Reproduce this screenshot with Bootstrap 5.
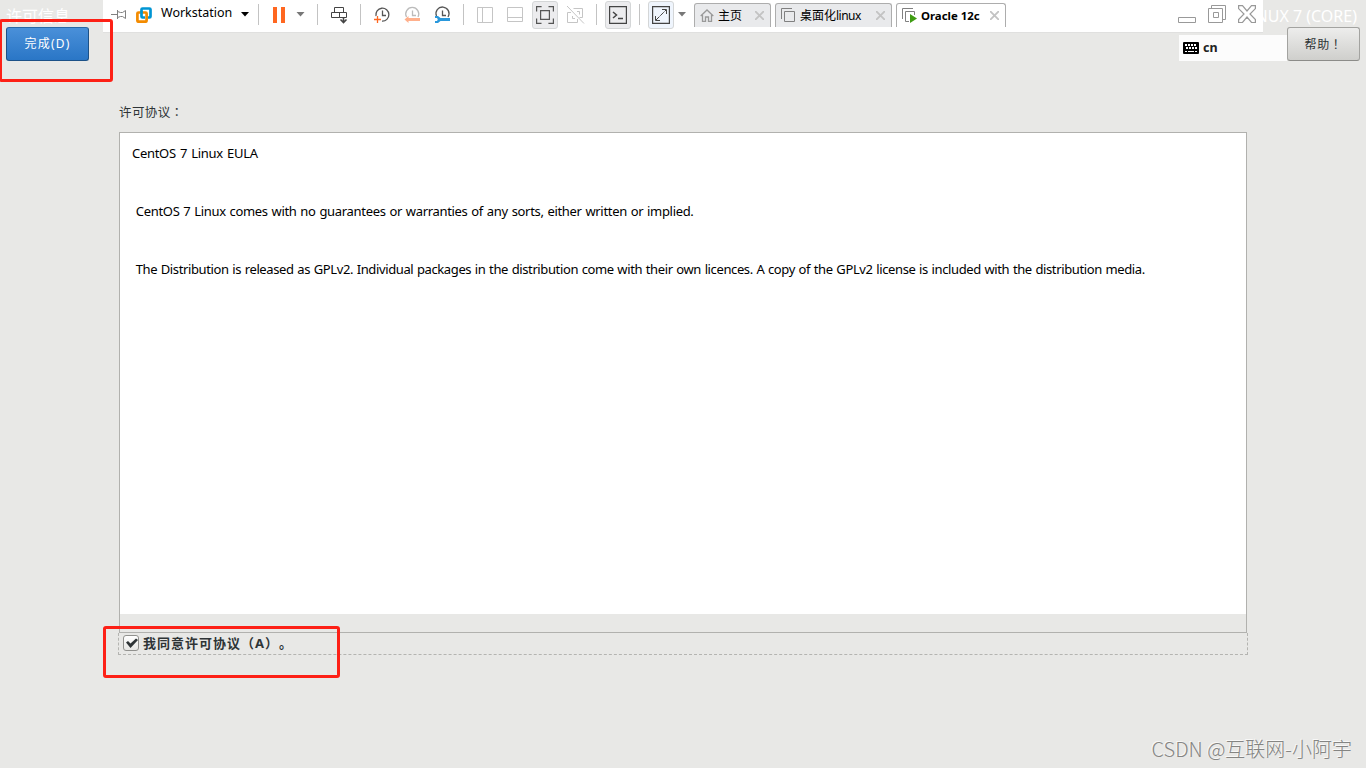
<!DOCTYPE html>
<html lang="zh-CN">
<head>
<meta charset="utf-8">
<meta name="viewport" content="width=device-width, initial-scale=1">
<title>许可信息</title>
<link href="https://cdn.jsdelivr.net/npm/bootstrap@5.3.0/dist/css/bootstrap.min.css" rel="stylesheet">
<style>
body{background:#e8e8e6;font-family:"Noto Sans","Noto Sans CJK SC",sans-serif;font-size:13px;color:#2e3436;height:768px;overflow:hidden}
svg{display:block;flex:none}
.installer{height:768px}
.top-line{height:27px;font-size:16px;line-height:24px;color:#fff;padding:4px 9px 0 6px}
.actions{padding:0 6px;height:34px}
.btn-done,.btn-help{height:34px;font-size:12px;padding:0;border-radius:3px;line-height:30px}
.btn-done{width:83px;color:#fff;border:1px solid #1c5187;border-top-color:#2867a5;background:linear-gradient(#4a90d9,#2a76c6);letter-spacing:1.2px}
.btn-help{width:73px;color:#2e3436;border:1px solid #a3a3a0;border-bottom-color:#8c8c89;background:linear-gradient(#ededec,#cfcfcc);letter-spacing:.6px}
.wide-mark{font-family:"Noto Sans CJK TC",sans-serif}
.keyboard{width:108px;height:26px;background:#fcfcfc;padding-left:4px;margin-top:8px;font-weight:700;color:#222;font-size:12.5px;gap:4px}
.license{margin:40px 119px 0 119px}
.license-label{height:31px;line-height:20px;font-size:12.5px;letter-spacing:.4px;padding-top:1px}
.eula{height:501px;border:1px solid #b1b1ae;background:#e8e8e6}
.eula-text{height:481px;background:#fff;color:#000;padding:11px 12px;line-height:19px;font-size:13px;white-space:pre}
.eula-text p{margin:0 0 39px}
.eula-title{letter-spacing:-.3px;word-spacing:1.1px}
.eula-terms{letter-spacing:-.32px;word-spacing:.75px}
.eula-source{letter-spacing:-.38px;word-spacing:.63px}
.agree{height:22px;margin:0 -1px;border:1px dashed #b4b4b1;border-top:0;padding:0 0 1px 4px;gap:4px;font-weight:700}
.agree label{letter-spacing:1px;line-height:20px;text-spacing-trim:space-all;font-feature-settings:"chws" 0,"halt" 0}
.tick{width:16px;height:16px;border:1px solid #91918e;border-radius:3px;background:linear-gradient(#fff,#e6e6e4)}
.vm-bar{left:103px;top:0;width:1160px;height:32px;padding-bottom:3px;background:#fff;color:#000;box-shadow:0 1px #e0e0df}
.vm-bar>*{flex:none}
.sep{width:1px;height:21px;background:#c3c3c3}
.m4{margin-left:4px}.m7{margin-left:7px}.m8{margin-left:8px}.m9{margin-left:9px}.m11{margin-left:11px}.m12{margin-left:12px}.m13{margin-left:13px}.m14{margin-left:14px}
.product{width:71px;font-size:12.5px;line-height:16px;margin-top:-3px;white-space:nowrap}
.tool{width:26px;height:28px;border:1px solid #d4d6d7;border-radius:3px;background:#ececee;display:flex;align-items:center;justify-content:center}
.tool-lit{background:#eff5fd}
.vm-tab{height:24px;margin-top:3px;border:1px solid #adadad;border-bottom:0;border-radius:3px 3px 0 0;background:#e9eaec;font-size:12px;padding:0 6px 0 5px;align-self:flex-start;white-space:nowrap}
.vm-tab.current{background:#fff;font-weight:700;font-size:11.4px}
.vm-tab span{line-height:22px}
.tab-linux{letter-spacing:-.5px}
.controls{gap:12px;padding-right:7px}
.marker{border:3px solid #fd2016;border-radius:3px}
.marker-done{left:-1px;top:19px;width:114px;height:63px}
.marker-agree{left:103px;top:626px;width:237px;height:52px}
.credit{right:14px;bottom:4px;font:300 20px/30px "Noto Sans CJK SC",sans-serif;color:#858583;text-shadow:-1px -1px #f8f8f7;white-space:nowrap}
</style>
</head>
<body>
<main class="installer position-relative overflow-hidden">
  <header>
    <div class="top-line d-flex justify-content-between"><span>许可信息</span><span>CENTOS LINUX 7 (CORE)</span></div>
    <div class="actions d-flex justify-content-between">
      <button class="btn btn-done">完成(D)</button>
      <div class="d-flex">
        <div class="keyboard d-flex align-items-center">
          <svg width="16" height="12" viewBox="0 0 16 12"><rect width="16" height="12" rx="1" fill="#000"/><path d="M2 3h12M3 6h11" stroke="#fff" stroke-width="2" stroke-dasharray="2 1"/><path d="M2 9.500h2M5 9.500h6M12 9.500h2" stroke="#fff"/></svg>
          <span>cn</span>
        </div>
        <button class="btn btn-help">帮助<span class="wide-mark" lang="zh-TW">！</span></button>
      </div>
    </div>
  </header>
  <section class="license">
    <div class="license-label">许可协议<span class="wide-mark" lang="zh-TW">：</span></div>
    <div class="eula"><div class="eula-text"><p class="eula-title">CentOS 7 Linux EULA</p><p class="eula-terms"> CentOS 7 Linux comes with no guarantees or warranties of any sorts, either written or implied.</p><p class="eula-source"> The Distribution is released as GPLv2. Individual packages in the distribution come with their own licences. A copy of the GPLv2 license is included with the distribution media.</p></div></div>
    <div class="agree d-flex align-items-center"><div class="tick"><svg width="14" height="14" viewBox="0 0 14 14"><path d="M2 6.500 4 5l2.500 2.500L12 2.500 14 4 6.500 12z" fill="#2e3436"/></svg></div><label>我同意许可协议<span>（</span>A<span>）</span><span>。</span></label></div>
  </section>

  <nav class="vm-bar position-absolute d-flex align-items-center">
    <svg class="m8" width="16" height="12" fill="none" stroke="#808080"><path d="M0 5.500h6M6.500 1v9M6.500 2.500l3 1h2l3-2v8l-3-2h-2l-3 1"/></svg>
    <svg class="m9" width="16" height="16" fill="none" stroke-width="2.700"><path d="M5.500 5V2.500q0-1 1-1h7q1 0 1 1v7q0 1-1 1H11" stroke="#0095d3"/><rect x="1.400" y="5.500" width="9.200" height="9.200" rx="1" stroke="#f38b00"/><path d="M5.500 4v5.500q0 1 1 1H9" stroke="#0095d3"/></svg>
    <span class="product m9">Workstation</span>
    <svg class="m9" width="9" height="5"><path d="M0 0h8L4 4.500z" fill="#000"/></svg>
    <i class="sep m8"></i>
    <svg class="m14" width="14" height="16" fill="#ff6720"><path d="M0 0h4v16H0zM8 0h4v16H8z"/></svg>
    <svg class="m9" width="9" height="5"><path d="M.5 0h8l-4 4.500z" fill="#777"/></svg>
    <i class="sep m12"></i>
    <svg class="m13" width="17" height="18" fill="none" stroke="#444"><path d="M3.500 1.500h9v5h-9zM.5 6.500h8v5h-8zM8.500 6.500h7v5h-7z"/><path d="M12.500 11v6M9.500 13.500l3 3 3-3" stroke-width="1.600"/></svg>
    <i class="sep m12"></i>
    <svg class="m12" width="18" height="18" fill="none" stroke="#555" stroke-width="1.300"><path d="M3 10a6.500 6.500 0 1 1 6 5.200M9.500 4.500v5H13"/><path d="M1 13.500h7M4.500 10v7" stroke="#ff6720" stroke-width="1.300"/></svg>
    <svg class="m12" width="18" height="18" fill="none" stroke="#bbb" stroke-width="1.300"><path d="M3.500 11A6.500 6.500 0 1 1 15 11M9.500 4.500v5H13"/><path d="m1.500 13.500 4-3.500v2h11.500v3H5.500v2z" fill="#ffb08c" stroke="none"/></svg>
    <svg class="m12" width="18" height="18" fill="none" stroke="#555" stroke-width="1.300"><path d="M3.500 10A6.500 6.500 0 1 1 15 11M9.500 4.500v5H13"/><path d="M2 10h3l2.500 2H17v3H7.500L5 17H2v-2h2l.8-1.500L4 12H2z" fill="#2a98dc" stroke="none"/></svg>
    <i class="sep m12"></i>
    <svg class="m13" width="16" height="16" fill="none" stroke="#c5c5c5"><path d="M.5.500h15v15H.5zM5.500.500v15"/></svg>
    <svg class="m14" width="16" height="16" fill="none" stroke="#c5c5c5"><path d="M.5.500h15v14H.5zM.5 10.500h15"/></svg>
    <span class="tool m9"><svg width="18" height="18" fill="none" stroke="#555" stroke-width="1.200"><path d="M.6 5.500V.6h5M12.500.6h4.900v5M17.400 12.500v4.900h-5M5.500 17.400H.6v-5M4.600 4.600h8.800v8.800H4.600z"/></svg></span>
    <svg class="m9" width="18" height="18" fill="none" stroke="#c5c5c5"><path d="M6.500 2.500h9v9h-3M10 5.500h2.500v3M4 6.500H.5v10h10V13M5.500 10v2.500H8M0 0l17 17.500"/></svg>
    <i class="sep m11"></i>
    <span class="tool m8"><svg width="18" height="18" fill="none" stroke="#444" stroke-width="1.200"><path d="M.6.600h16.800v16.800H.6z"/><path d="m4 6 3.500 3L4 12M9 12.500h5" stroke-width="1.500"/></svg></span>
    <i class="sep m8"></i>
    <span class="tool tool-lit m8"><svg width="18" height="18" fill="none" stroke="#444" stroke-width="1.200"><path d="M.6.600h16.800v16.800H.6z"/><path d="M10 3.500h4.500V8M3.500 10v4.500H8" stroke-width="1"/><path d="m4 14 10-10" stroke-width="1" stroke-dasharray="5 1"/></svg></span>
    <svg class="m4" width="9" height="5"><path d="M0 0h8L4 4.500z" fill="#777"/></svg>
    <div class="vm-tab m7 d-flex align-items-center" style="width:77px">
      <svg width="14" height="13" fill="none" stroke="#999" stroke-width="1.300"><path d="M.7 7 7 1l6.300 6M2.500 6v6.300h3V8h3v4.300h3V6"/></svg><span class="m4">主页</span>
      <svg class="ms-auto" width="9" height="9" stroke="#c3c3c3" stroke-width="1.800"><path d="m0 0 9 9M9 0 0 9"/></svg>
    </div>
    <div class="vm-tab m4 d-flex align-items-center" style="width:117px">
      <svg width="15" height="15" fill="none" stroke="#808080"><path d="M3.500 3.500h10v10h-10zM.5 11V.5H11"/></svg><span class="m4">桌面化<span class="tab-linux">linux</span></span>
      <svg class="ms-auto" width="9" height="9" stroke="#c3c3c3" stroke-width="1.800"><path d="m0 0 9 9M9 0 0 9"/></svg>
    </div>
    <div class="vm-tab current m4 d-flex align-items-center" style="width:110px">
      <svg width="15" height="15" fill="none" stroke="#808080"><path d="M7 13.500H3.500v-10h9V7M.5 11V.5H11"/><path d="m8 6 7 4.500L8 15z" fill="#3f9c13" stroke="none"/></svg><span class="m4">Oracle 12c</span>
      <svg class="ms-auto" width="9" height="9" stroke="#c3c3c3" stroke-width="1.800"><path d="m0 0 9 9M9 0 0 9"/></svg>
    </div>
    <div class="controls ms-auto d-flex">
      <svg width="18" height="19" fill="none" stroke="#999"><path d="M.5 12.500h17v5H.5z"/></svg>
      <svg width="18" height="19" fill="none" stroke="#999"><path d="M.5 3.500h14v14H.5zM3.500 3.500v-3h14v14h-3M5.500 7.500h5v5h-5z"/></svg>
      <svg width="18" height="19" fill="none" stroke="#999" stroke-width="1.200"><path d="M.6.600h3.900L9 6 13.500.600h3.900v3L12 9l5.400 5.500v3h-3.900L9 12l-4.500 5.500H.6v-3L6 9 .6 3.600z"/></svg>
    </div>
  </nav>

  <div class="marker marker-done position-absolute"></div>
  <div class="marker marker-agree position-absolute"></div>
  <div class="credit position-absolute">CSDN @互联网-小阿宇</div>
</main>
<script src="https://cdn.jsdelivr.net/npm/bootstrap@5.3.0/dist/js/bootstrap.bundle.min.js"></script>
</body>
</html>
